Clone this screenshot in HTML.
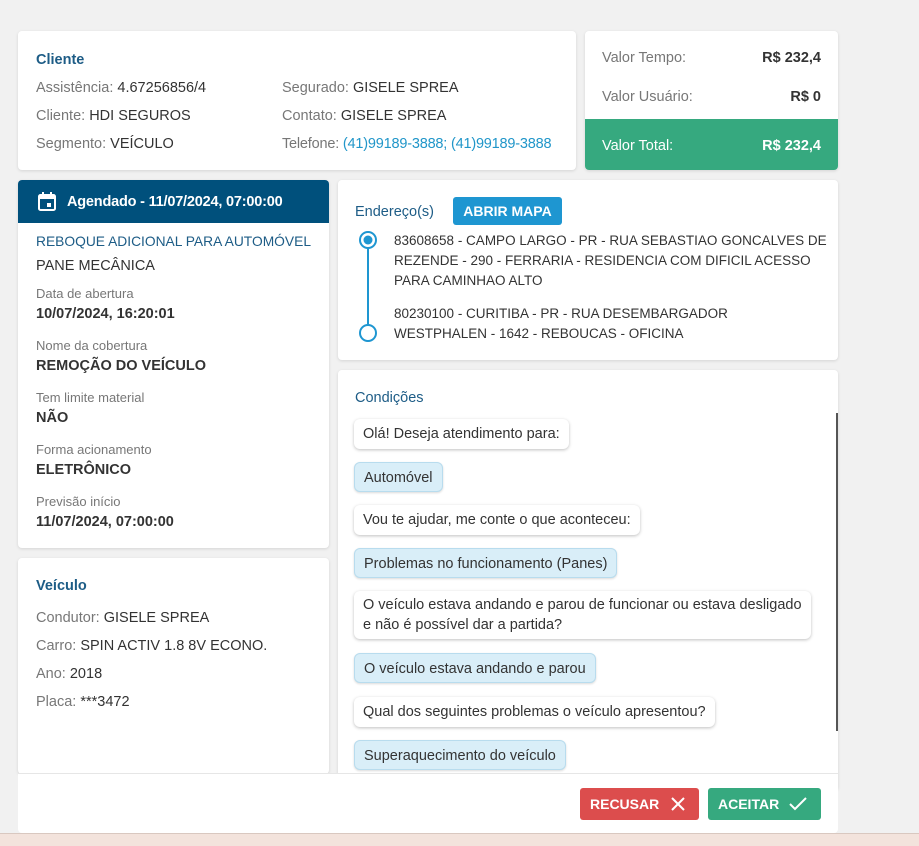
<!DOCTYPE html>
<html><head><meta charset="utf-8"><style>
*{box-sizing:border-box;margin:0;padding:0}
body{width:919px;height:846px;background:#f1f1f1;font-family:"Liberation Sans",sans-serif;font-size:14.5px;color:#333;position:relative;overflow:hidden}
.card{position:absolute;background:#fff;border-radius:4px;box-shadow:0 1px 3px rgba(0,0,0,.12)}
.t{position:absolute;white-space:nowrap}
.h{color:#1d5c86;font-weight:bold;font-size:14.5px}
.l{color:#777}
.lbl{color:#777;font-size:13px}
.b{font-weight:bold}
.bub{position:absolute;left:354px;height:30px;padding:0 9px;line-height:30px;border-radius:6px;background:#fff;box-shadow:0 1px 3px rgba(0,0,0,.25);white-space:nowrap;font-size:14.5px}
.bub.u{background:#d9eef8;border:1px solid #b8dcee;box-shadow:0 1px 2px rgba(0,0,0,.15)}
</style></head><body>
<div style="position:absolute;left:0;top:833px;width:919px;height:13px;background:#f3e3dc;border-top:1px solid #d9c8c0"></div>

<div class="card" style="left:18px;top:31px;width:558px;height:139px"></div>
<div class="t h" style="left:36px;top:52px">Cliente</div>
<div class="t" style="left:36px;top:80px"><span class="l">Assistência:</span> 4.67256856/4</div>
<div class="t" style="left:36px;top:108px"><span class="l">Cliente:</span> HDI SEGUROS</div>
<div class="t" style="left:36px;top:136px"><span class="l">Segmento:</span> VEÍCULO</div>
<div class="t" style="left:282px;top:80px"><span class="l">Segurado:</span> GISELE SPREA</div>
<div class="t" style="left:282px;top:108px"><span class="l">Contato:</span> GISELE SPREA</div>
<div class="t" style="left:282px;top:136px;letter-spacing:-.2px"><span class="l">Telefone:</span> <span style="color:#2196c9">(41)99189-3888; (41)99189-3888</span></div>

<div class="card" style="left:585px;top:31px;width:253px;height:139px;overflow:hidden">
<div style="position:absolute;left:0;top:88px;width:253px;height:51px;background:#36a97f"></div></div>
<div class="t l" style="left:602px;top:50px">Valor Tempo:</div>
<div class="t b" style="right:98px;top:50px">R$ 232,4</div>
<div class="t l" style="left:602px;top:89px">Valor Usuário:</div>
<div class="t b" style="right:98px;top:89px">R$ 0</div>
<div class="t" style="left:602px;top:138px;color:#fff">Valor Total:</div>
<div class="t b" style="right:98px;top:138px;color:#fff">R$ 232,4</div>

<div class="card" style="left:18px;top:180px;width:311px;height:368px;overflow:hidden">
<div style="height:43px;background:#00507c"></div></div>
<svg style="position:absolute;left:37px;top:191px" width="20" height="21" viewBox="0 0 20 21"><rect x="2" y="4" width="16" height="15" rx="1.5" fill="none" stroke="#fff" stroke-width="2"/><rect x="2" y="4" width="16" height="4" fill="#fff"/><rect x="5" y="1" width="2" height="4" fill="#fff"/><rect x="13" y="1" width="2" height="4" fill="#fff"/><rect x="10" y="12" width="4" height="4" fill="#fff"/></svg>
<div class="t b" style="left:67px;top:194px;color:#fff;font-size:14.5px;letter-spacing:-.2px">Agendado - 11/07/2024, 07:00:00</div>
<div class="t" style="left:36px;top:234px;color:#1d5c86;font-size:13.8px">REBOQUE ADICIONAL PARA AUTOMÓVEL</div>
<div class="t" style="left:36px;top:258px">PANE MECÂNICA</div>
<div class="t lbl" style="left:36px;top:286px">Data de abertura</div>
<div class="t b" style="left:36px;top:306px">10/07/2024, 16:20:01</div>
<div class="t lbl" style="left:36px;top:338px">Nome da cobertura</div>
<div class="t b" style="left:36px;top:358px">REMOÇÃO DO VEÍCULO</div>
<div class="t lbl" style="left:36px;top:390px">Tem limite material</div>
<div class="t b" style="left:36px;top:410px">NÃO</div>
<div class="t lbl" style="left:36px;top:442px">Forma acionamento</div>
<div class="t b" style="left:36px;top:462px">ELETRÔNICO</div>
<div class="t lbl" style="left:36px;top:494px">Previsão início</div>
<div class="t b" style="left:36px;top:514px">11/07/2024, 07:00:00</div>

<div class="card" style="left:18px;top:558px;width:311px;height:216px"></div>
<div class="t h" style="left:36px;top:578px">Veículo</div>
<div class="t" style="left:36px;top:610px"><span class="l">Condutor:</span> GISELE SPREA</div>
<div class="t" style="left:36px;top:638px"><span class="l">Carro:</span> SPIN ACTIV 1.8 8V ECONO.</div>
<div class="t" style="left:36px;top:666px"><span class="l">Ano:</span> 2018</div>
<div class="t" style="left:36px;top:694px"><span class="l">Placa:</span> ***3472</div>

<div class="card" style="left:338px;top:180px;width:500px;height:180px"></div>
<div class="t h" style="left:355px;top:204px;font-weight:normal">Endereço(s)</div>
<div style="position:absolute;left:453px;top:197px;width:109px;height:28px;background:#1e96d1;border-radius:3px;color:#fff;font-weight:bold;font-size:14px;line-height:28px;text-align:center">ABRIR MAPA</div>
<svg style="position:absolute;left:357px;top:230px" width="22" height="115"><line x1="11" y1="10" x2="11" y2="98" stroke="#1e96d1" stroke-width="2"/><circle cx="11" cy="10" r="8" fill="#fff" stroke="#1e96d1" stroke-width="2"/><circle cx="11" cy="10" r="4.5" fill="#1e96d1"/><circle cx="11" cy="103" r="8" fill="#fff" stroke="#1e96d1" stroke-width="2"/></svg>
<div class="t" style="left:394px;top:231px;line-height:20px;font-size:13.5px">83608658 - CAMPO LARGO - PR - RUA SEBASTIAO GONCALVES DE<br>REZENDE - 290 - FERRARIA - RESIDENCIA COM DIFICIL ACESSO<br>PARA CAMINHAO ALTO</div>
<div class="t" style="left:394px;top:304px;line-height:20px;font-size:13.5px">80230100 - CURITIBA - PR - RUA DESEMBARGADOR<br>WESTPHALEN - 1642 - REBOUCAS - OFICINA</div>

<div class="card" style="left:338px;top:370px;width:500px;height:420px"></div>
<div class="t h" style="left:355px;top:390px;font-weight:normal">Condições</div>
<div style="position:absolute;left:836px;top:413px;width:2px;height:318px;background:#555"></div>
<div class="bub" style="top:419px">Olá! Deseja atendimento para:</div>
<div class="bub u" style="top:462px">Automóvel</div>
<div class="bub" style="top:505px">Vou te ajudar, me conte o que aconteceu:</div>
<div class="bub u" style="top:548px">Problemas no funcionamento (Panes)</div>
<div class="bub" style="top:591px;height:48px;line-height:20px;padding-top:4px">O veículo estava andando e parou de funcionar ou estava desligado<br>e não é possível dar a partida?</div>
<div class="bub u" style="top:653px">O veículo estava andando e parou</div>
<div class="bub" style="top:697px">Qual dos seguintes problemas o veículo apresentou?</div>
<div class="bub u" style="top:740px">Superaquecimento do veículo</div>

<div style="position:absolute;left:18px;top:773px;width:820px;height:60px;background:#fff;border-top:1px solid #e6e6e6;border-radius:0 0 4px 4px"></div>
<div style="position:absolute;left:580px;top:788px;width:119px;height:32px;background:#dc4d4d;border-radius:3px;color:#fff;font-weight:bold;font-size:14px;line-height:32px;padding-left:10px">RECUSAR<svg style="position:absolute;left:91px;top:9px" width="14" height="14"><path d="M1 1L13 13M13 1L1 13" stroke="#fff" stroke-width="2"/></svg></div>
<div style="position:absolute;left:708px;top:788px;width:113px;height:32px;background:#36a97f;border-radius:3px;color:#fff;font-weight:bold;font-size:14px;line-height:32px;padding-left:10px">ACEITAR<svg style="position:absolute;left:81px;top:9px" width="18" height="14"><path d="M1 7L6 12L17 1" fill="none" stroke="#fff" stroke-width="2"/></svg></div>
</body></html>
